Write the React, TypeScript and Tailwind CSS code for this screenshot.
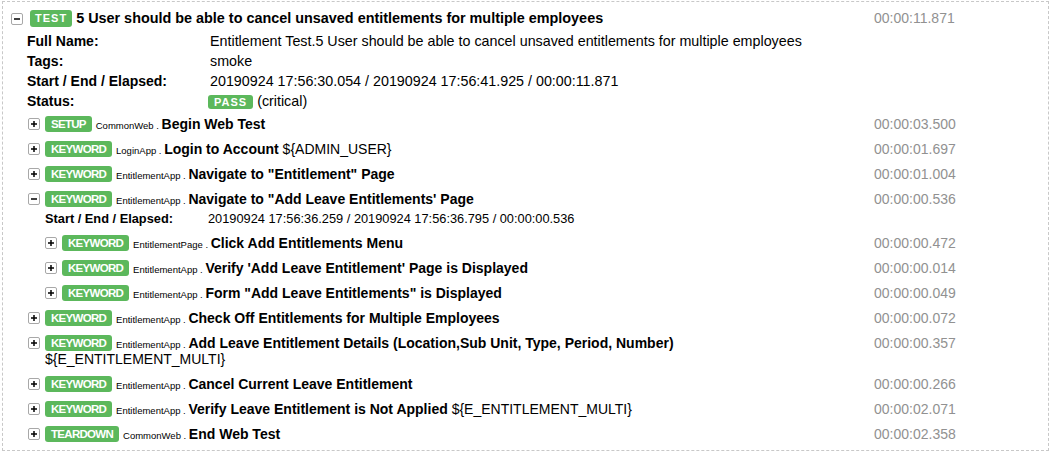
import React from "react";

type Kw = {
  level: 1 | 2;
  type: string;
  lib: string;
  name: string;
  args?: string;
  elapsed: string;
  open?: boolean;
  meta?: string;
};

const keywords: Kw[] = [
  { level: 1, type: "SETUP", lib: "CommonWeb", name: "Begin Web Test", elapsed: "00:00:03.500" },
  { level: 1, type: "KEYWORD", lib: "LoginApp", name: "Login to Account", args: "${ADMIN_USER}", elapsed: "00:00:01.697" },
  { level: 1, type: "KEYWORD", lib: "EntitlementApp", name: 'Navigate to "Entitlement" Page', elapsed: "00:00:01.004" },
  {
    level: 1,
    type: "KEYWORD",
    lib: "EntitlementApp",
    name: "Navigate to \"Add Leave Entitlements' Page",
    elapsed: "00:00:00.536",
    open: true,
    meta: "20190924 17:56:36.259 / 20190924 17:56:36.795 / 00:00:00.536",
  },
  { level: 2, type: "KEYWORD", lib: "EntitlementPage", name: "Click Add Entitlements Menu", elapsed: "00:00:00.472" },
  { level: 2, type: "KEYWORD", lib: "EntitlementApp", name: "Verify 'Add Leave Entitlement' Page is Displayed", elapsed: "00:00:00.014" },
  { level: 2, type: "KEYWORD", lib: "EntitlementApp", name: 'Form "Add Leave Entitlements" is Displayed', elapsed: "00:00:00.049" },
  { level: 1, type: "KEYWORD", lib: "EntitlementApp", name: "Check Off Entitlements for Multiple Employees", elapsed: "00:00:00.072" },
  {
    level: 1,
    type: "KEYWORD",
    lib: "EntitlementApp",
    name: "Add Leave Entitlement Details (Location,Sub Unit, Type, Period, Number)",
    args: "${E_ENTITLEMENT_MULTI}",
    elapsed: "00:00:00.357",
  },
  { level: 1, type: "KEYWORD", lib: "EntitlementApp", name: "Cancel Current Leave Entitlement", elapsed: "00:00:00.266" },
  { level: 1, type: "KEYWORD", lib: "EntitlementApp", name: "Verify Leave Entitlement is Not Applied", args: "${E_ENTITLEMENT_MULTI}", elapsed: "00:00:02.071" },
  { level: 1, type: "TEARDOWN", lib: "CommonWeb", name: "End Web Test", elapsed: "00:00:02.358" },
];

function Toggle({ open, className }: { open?: boolean; className?: string }) {
  return (
    <span
      className={
        "inline-flex w-[12px] h-[12px] shrink-0 items-center justify-center rounded-[2px] border border-[#a8a8a8] bg-white " +
        (className ?? "")
      }
    >
      <svg width="8" height="8" viewBox="0 0 8 8">
        <path d="M1 4h6" stroke="#000" strokeWidth="1.5" />
        {!open && <path d="M4 1v6" stroke="#000" strokeWidth="1.5" />}
      </svg>
    </span>
  );
}

function Badge({ text }: { text: string }) {
  return (
    <span className="inline-block align-top h-[16px] px-[6px] rounded-[3px] bg-[#5cb85c] text-white font-bold text-[11.5px] leading-[16px] tracking-[-0.7px]">
      {text}
    </span>
  );
}

function KeywordRow({ kw }: { kw: Kw }) {
  return (
    <>
      <div className="flex items-start pt-[5px] pb-[4px]">
        <div className={(kw.level === 1 ? "pl-[25px]" : "pl-[42px]") + " flex flex-1 min-w-0 items-start"}>
          <Toggle open={kw.open} className="mt-[2px]" />
          <div className="ml-[5px] flex-1 pr-[30px] text-[14px] leading-[16px] text-black">
            <Badge text={kw.type} />{" "}
            <span className="text-[9.5px] leading-none">{kw.lib} . </span>
            <span className="font-bold">{kw.name}</span>
            {kw.args && <span> {kw.args}</span>}
          </div>
        </div>
        <div className="w-[174px] shrink-0 text-[14px] leading-[16px] text-[#919191]">{kw.elapsed}</div>
      </div>
      {kw.meta && (
        <div className="grid grid-cols-[163px_1fr] pl-[42px] pb-[3px] text-[12.8px] leading-[16px] text-black">
          <div className="font-bold">Start / End / Elapsed:</div>
          <div>{kw.meta}</div>
        </div>
      )}
    </>
  );
}

export default function App() {
  return (
    <div
      className="bg-white w-[1052px] h-[454px] pt-[1px] pl-[2px]"
      style={{ fontFamily: '"Liberation Sans", Arial, Helvetica, sans-serif' }}
    >
      <div className="w-[1047px] border border-dashed border-[#c8c8c8] pt-[8px] pb-[4px]">
        {/* Test header */}
        <div className="flex items-start">
          <div className="flex flex-1 items-start pl-[8px]">
            <Toggle open className="mt-[3px]" />
            <div className="ml-[7px] text-[14.4px] leading-[17px] text-black">
              <span className="inline-block align-top h-[17px] px-[5px] rounded-[3px] bg-[#5cb85c] text-white font-bold text-[11px] leading-[17px] tracking-[1px]">
                TEST
              </span>{" "}
              <span className="font-bold">5 User should be able to cancel unsaved entitlements for multiple employees</span>
            </div>
          </div>
          <div className="w-[174px] shrink-0 text-[14px] leading-[17px] text-[#919191]">00:00:11.871</div>
        </div>

        {/* Test metadata */}
        <div className="mt-[4px] grid grid-cols-[183px_1fr] pl-[24px] text-[14.3px] leading-[20px] text-black">
          <div className="font-bold text-[14px]">Full Name:</div>
          <div>Entitlement Test.5 User should be able to cancel unsaved entitlements for multiple employees</div>
          <div className="font-bold text-[14px]">Tags:</div>
          <div>smoke</div>
          <div className="font-bold text-[14px]">Start / End / Elapsed:</div>
          <div>20190924 17:56:30.054 / 20190924 17:56:41.925 / 00:00:11.871</div>
          <div className="font-bold text-[14px]">Status:</div>
          <div>
            <span className="-ml-[2px] inline-block align-middle h-[14px] px-[6px] rounded-[3px] bg-[#5cb85c] text-white font-bold text-[11px] leading-[14px] tracking-[1px]">
              PASS
            </span>{" "}
            (critical)
          </div>
        </div>

        {keywords.map((kw, i) => (
          <KeywordRow key={i} kw={kw} />
        ))}
      </div>
    </div>
  );
}
